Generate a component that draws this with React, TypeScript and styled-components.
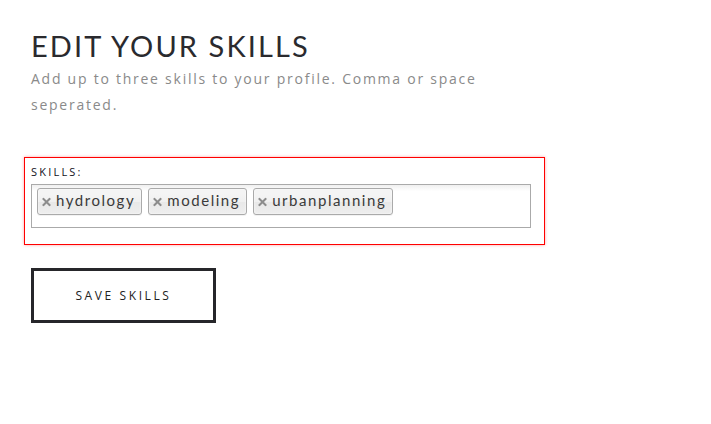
import React from "react";
import styled, { createGlobalStyle } from "styled-components";

const Global = createGlobalStyle`
  html, body { margin: 0; padding: 0; background: #fff; }
  body { font-family: "Open Sans", sans-serif; }
  * { box-sizing: border-box; }
`;

const Page = styled.div`
  padding: 28px 0 0 31px;
  width: 711px;
  height: 424px;
`;

const Title = styled.h1`
  margin: 0;
  font-family: "Lato", sans-serif;
  font-weight: 400;
  font-size: 29px;
  line-height: 36px;
  letter-spacing: 2.1px;
  color: #2a2a2e;
`;

const Subtitle = styled.p`
  margin: 2px 0 0;
  width: 480px;
  font-family: "Open Sans", sans-serif;
  font-size: 14px;
  line-height: 26px;
  letter-spacing: 1.75px;
  color: #8a8a8a;
`;

const FieldGroup = styled.div`
  margin: 39px 0 0 -7px;
  width: 521px;
  border: 1px solid #ff0000;
  box-shadow: 0 0 3px rgba(255, 0, 0, 0.35);
  padding: 6px 12px 16px 6px;
`;

const Label = styled.label`
  display: block;
  font-family: "Open Sans", sans-serif;
  font-size: 11px;
  line-height: 16px;
  letter-spacing: 2.2px;
  color: #111122;
  margin-bottom: 4px;
`;

const TagBox = styled.div`
  width: 500px;
  height: 44px;
  border: 1px solid #aaa;
  background: linear-gradient(to bottom, #f0f0f0 0%, #fff 15%);
  display: flex;
  align-items: flex-start;
  gap: 6px;
  padding: 3px 0 0 5px;
`;

const Tag = styled.div`
  position: relative;
  height: 27px;
  border: 1px solid #aaa;
  border-radius: 3px;
  background: linear-gradient(to bottom, #f4f4f4 20%, #f0f0f0 50%, #e8e8e8 52%, #eee 100%);
  box-shadow: 0 0 2px #fff inset, 0 1px 0 rgba(0, 0, 0, 0.05);
  padding: 0 6px 0 18px;
  display: flex;
  align-items: center;
  font-family: "Lato", sans-serif;
  font-size: 15px;
  letter-spacing: 1.55px;
  color: #3a3a3a;
`;

const Close = styled.span`
  position: absolute;
  left: 4px;
  top: 50%;
  transform: translateY(-50%);
  width: 9px;
  height: 9px;
  display: flex;
`;

const TagText = styled.span`
  position: relative;
  top: -2px;
`;

const SaveButton = styled.button`
  margin-top: 23px;
  width: 185px;
  height: 55px;
  border: 3px solid #26262a;
  background: #fff;
  font-family: "Open Sans", sans-serif;
  font-size: 12px;
  letter-spacing: 2.6px;
  color: #222;
  padding: 0;
  cursor: pointer;
`;

const CloseIcon = () => (
  <Close>
    <svg width="9" height="9" viewBox="0 0 9 9">
      <path d="M1.5 1.5 L7.5 7.5 M7.5 1.5 L1.5 7.5" stroke="#8c8c8c" strokeWidth="2" strokeLinecap="square" />
    </svg>
  </Close>
);

const skills = ["hydrology", "modeling", "urbanplanning"];

export default function App() {
  return (
    <Page>
      <Global />
      <Title>EDIT YOUR SKILLS</Title>
      <Subtitle>Add up to three skills to your profile. Comma or space seperated.</Subtitle>
      <FieldGroup>
        <Label>SKILLS:</Label>
        <TagBox>
          {skills.map((s) => (
            <Tag key={s}>
              <CloseIcon />
              <TagText>{s}</TagText>
            </Tag>
          ))}
        </TagBox>
      </FieldGroup>
      <SaveButton>SAVE SKILLS</SaveButton>
    </Page>
  );
}
